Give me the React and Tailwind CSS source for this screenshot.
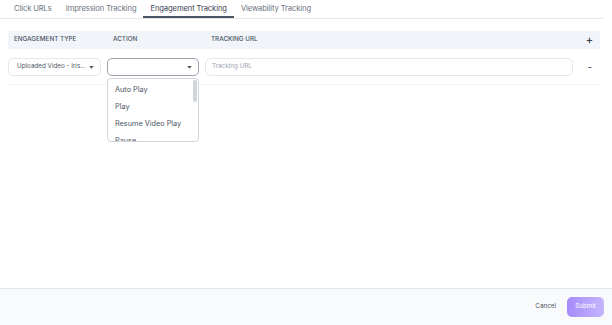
import React from "react";

const tabs = ["Click URLs", "Impression Tracking", "Engagement Tracking", "Viewability Tracking"];
const options = ["Auto Play", "Play", "Resume Video Play", "Pause"];

function Caret() {
  return (
    <svg width="5" height="3" viewBox="0 0 6 4" className="shrink-0">
      <path d="M0 0 L6 0 L3 3.5 Z" fill="#4b5563" />
    </svg>
  );
}

export default function App() {
  return (
    <div
      className="h-[325px] w-[612px] flex flex-col bg-white text-[#4b5563]"
      style={{ fontFamily: "Inter, 'Noto Sans', sans-serif" }}
    >
      <div className="flex-1">
        {/* tabs */}
        <div className="flex h-[19px] mr-[9px] border-b border-[#e5e7eb] pl-[7px]">
          {tabs.map((t, i) => (
            <div
              key={t}
              className={
                "px-[7px] text-[7.6px] tracking-[-0.1px] leading-[17px] " +
                (i === 2
                  ? "border-b-2 border-[#4b5563] text-[#374151]"
                  : "text-[#6b7280]")
              }
            >
              {t}
            </div>
          ))}
        </div>

        <div className="ml-[8px] mr-[12px] mt-[12px]">
          {/* header */}
          <div className="grid grid-cols-[93px_92px_368px_1fr] gap-x-[6px] h-[18px] items-center bg-[#f1f5f9] text-[6.3px] font-medium text-[#4b5563]">
            <div className="pl-[6px]">ENGAGEMENT TYPE</div>
            <div className="pl-[6px]">ACTION</div>
            <div className="pl-[6px]">TRACKING URL</div>
            <div className="flex justify-end pr-[7px] text-[11px] leading-none text-[#374151]">+</div>
          </div>

          {/* row */}
          <div className="grid grid-cols-[93px_92px_368px_1fr] gap-x-[6px] pt-[9px] pb-[8px] border-b border-[#f1f5f9] items-center">
            <div className="h-[18px] rounded-[5px] border border-[#e5e7eb] flex items-center justify-between pl-[8px] pr-[6px] text-[6.3px] text-[#4b5563]">
              <span className="whitespace-nowrap">Uploaded Video - Iris...</span>
              <Caret />
            </div>
            <div className="relative">
              <div className="h-[18px] rounded-[5px] border border-[#9ca3af] flex items-center justify-end pr-[6px]">
                <Caret />
              </div>
              <div className="absolute left-0 top-[20px] w-[92px] h-[64px] rounded-[4px] border border-[#d1d5db] bg-white overflow-hidden z-10">
                <div className="absolute right-[1px] top-[1px] w-[4px] h-[22px] rounded-[2px] bg-[#d1d5db]" />
                <div className="pt-[2px]">
                  {options.map((o) => (
                    <div key={o} className="pl-[7px] h-[17px] leading-[17px] text-[7.3px] text-[#4b5563]">
                      {o}
                    </div>
                  ))}
                </div>
              </div>
            </div>
            <div className="h-[18px] rounded-[6px] border border-[#e5e7eb] flex items-center pl-[6px] text-[6.3px] text-[#9ca3af]">
              Tracking URL
            </div>
            <div className="flex justify-end pr-[8px] text-[10px] leading-none text-[#374151]">-</div>
          </div>
        </div>
      </div>

      {/* footer */}
      <div className="h-[37px] border-t border-[#e5e7eb] bg-[#f9fafb] flex items-center justify-end gap-[11px] pr-[8px]">
        <button className="text-[6.3px] text-[#4b5563]">Cancel</button>
        <button className="h-[20px] w-[37px] rounded-[5px] bg-gradient-to-r from-[#a78bfa] to-[#c4b5fd] text-[6.3px] text-white">
          Submit
        </button>
      </div>
    </div>
  );
}
